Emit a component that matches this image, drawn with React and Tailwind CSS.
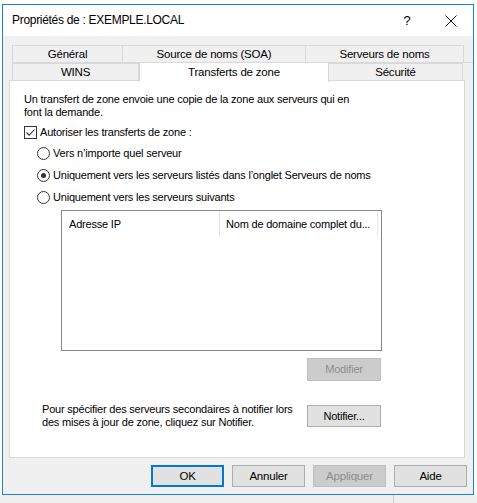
import React from "react"

const font = { fontFamily: '"Liberation Sans", Arial, sans-serif' }

function Tab({ label, w, selected }) {
  if (selected) {
    return (
      <div className={`${w} h-[20px] -mt-[1px] -mb-[1px] relative z-10 bg-white border-x border-t border-[#d9d9d9] flex items-center justify-center`}>
        {label}
      </div>
    )
  }
  return (
    <div className={`${w} h-full bg-[#f0f0f0] border-x border-t border-[#d9d9d9] -ml-px first:ml-0 flex items-center justify-center`}>
      {label}
    </div>
  )
}

function Radio({ checked, children }) {
  return (
    <div className="flex items-center h-[13px] pl-[27px]">
      <span className="w-[13px] h-[13px] rounded-full border border-[#333] bg-white flex items-center justify-center">
        {checked && <span className="w-[5px] h-[5px] rounded-full bg-[#333]" />}
      </span>
      <span className="ml-[3px] whitespace-nowrap">{children}</span>
    </div>
  )
}

function Btn({ children, disabled, primary, className = "" }) {
  let cls = "bg-[#e1e1e1] border border-[#adadad] text-black"
  if (disabled) cls = "bg-[#cccccc] border border-[#bfbfbf] text-[#8c8c8c]"
  if (primary) cls = "bg-[#e1e1e1] border-2 border-[#0078d7] text-black"
  return (
    <div className={`h-[22px] flex items-center justify-center ${cls} ${className}`}>
      {children}
    </div>
  )
}

export default function App() {
  return (
    <div className="w-[477px] h-[503px] bg-white overflow-hidden text-[11px] tracking-[-0.2px] text-black leading-[13px]" style={font}>
      <div className="ml-[2px] mt-[4px] w-[472px] h-[491px] border border-[#1883d7] bg-[#f0f0f0] flex flex-col">
        {/* title bar */}
        <div className="h-[31px] bg-white flex items-center pl-[9px]">
          <span className="flex-1 text-[12px] tracking-[-0.3px]">Propriétés de : EXEMPLE.LOCAL</span>
          <span className="w-[20px] text-center text-[13px] mr-[28px]">?</span>
          <svg width="12" height="12" viewBox="0 0 12 12" className="mr-[16px]">
            <path d="M0.5 0.5 L11.5 11.5 M11.5 0.5 L0.5 11.5" stroke="#111" strokeWidth="1" />
          </svg>
        </div>

        {/* tabs */}
        <div className="mt-[9px] ml-[9px] text-[11.5px]">
          <div className="flex h-[17px]">
            <Tab label="Général" w="w-[111px]" />
            <Tab label="Source de noms (SOA)" w="w-[184px]" />
            <Tab label="Serveurs de noms" w="w-[159px]" />
          </div>
          <div className="flex h-[18px] border-t border-[#d9d9d9]">
            <Tab label="WINS" w="w-[127px]" />
            <Tab label="Transferts de zone" w="w-[190px]" selected />
            <Tab label="Sécurité" w="w-[135px]" />
          </div>
        </div>

        {/* panel */}
        <div className="ml-[6px] w-[456px] h-[378px] bg-white border border-[#d9d9d9] pt-[12px] flex flex-col">
          <p className="pl-[14px]">
            Un transfert de zone envoie une copie de la zone aux serveurs qui en
            <br />
            font la demande.
          </p>
          <div className="flex items-center h-[13px] pl-[14px] mt-[7px]">
            <span className="w-[13px] h-[13px] border border-[#333] bg-white flex items-center justify-center">
              <svg width="11" height="11" viewBox="0 0 11 11">
                <path d="M1.5 5.5 L4.2 8.2 L9.5 2.5" fill="none" stroke="#333" strokeWidth="1.1" />
              </svg>
            </span>
            <span className="ml-[3px]">Autoriser les transferts de zone :</span>
          </div>
          <div className="mt-[8px] flex flex-col gap-[9px]">
            <Radio>Vers n’importe quel serveur</Radio>
            <Radio checked>Uniquement vers les serveurs listés dans l’onglet Serveurs de noms</Radio>
            <Radio>Uniquement vers les serveurs suivants</Radio>
          </div>

          {/* list */}
          <div className="ml-[51px] mt-[6px] w-[321px] h-[141px] border border-[#828790] bg-white">
            <div className="flex h-[25px] pt-[1px]">
              <div className="w-[158px] pl-[7px] flex items-center border-r border-[#e5e5e5]">Adresse IP</div>
              <div className="w-[158px] pl-[6px] flex items-center border-r border-[#e5e5e5] whitespace-nowrap overflow-hidden">
                Nom de domaine complet du...
              </div>
            </div>
          </div>

          <div className="flex justify-end pr-[83px] mt-[7px]">
            <Btn disabled className="w-[74px] h-[23px]">Modifier</Btn>
          </div>

          <div className="flex items-center pl-[32px] pr-[83px] mt-[22px]">
            <p className="flex-1 whitespace-nowrap">
              Pour spécifier des serveurs secondaires à notifier lors
              <br />
              des mises à jour de zone, cliquez sur Notifier.
            </p>
            <Btn className="w-[74px]">Notifier...</Btn>
          </div>
        </div>

        {/* bottom buttons */}
        <div className="flex justify-end gap-[8px] pr-[6px] mt-[7px] text-[11.5px]">
          <Btn primary className="w-[73px]">OK</Btn>
          <Btn className="w-[73px]">Annuler</Btn>
          <Btn disabled className="w-[73px]">Appliquer</Btn>
          <Btn className="w-[73px]">Aide</Btn>
        </div>
      </div>
      <div className="h-[8px] bg-[#f0f0f0] flex">
        <div className="ml-[393px] w-px h-full bg-[#d0d0d0]" />
      </div>
    </div>
  )
}
